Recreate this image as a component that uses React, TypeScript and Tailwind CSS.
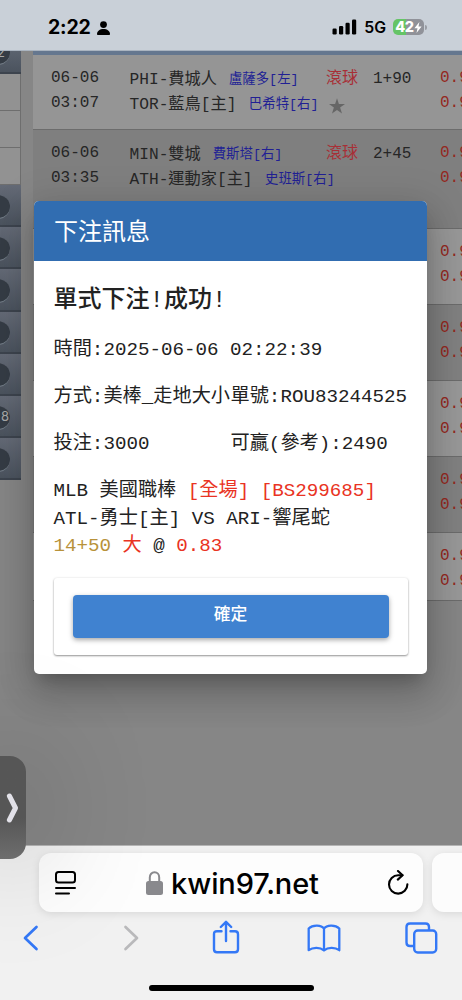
import { useState } from 'react';
import type { ReactNode } from 'react';

const games = [
  {
    date: '06-06', time: '03:07', away: 'PHI-費城人', awayPitcher: '盧薩多[左]',
    home: 'TOR-藍鳥[主]', homePitcher: '巴希特[右]', line: '1+90', star: true, row: 'h-[75px] bg-[#959595]',
  },
  {
    date: '06-06', time: '03:35', away: 'MIN-雙城', awayPitcher: '費斯塔[右]',
    home: 'ATH-運動家[主]', homePitcher: '史班斯[右]', line: '2+45', star: false, row: 'h-[99px] bg-[#7f7f7f]',
  },
];

// Rows that only show their odds beside the dialog
const moreRows = [
  'h-[76px] bg-[#989898]',
  'h-[76px] bg-[#818181]',
  'h-[76px] bg-[#989898]',
  'h-[76px] bg-[#818181]',
  'h-[68px] bg-[#989898]',
];

const menuItems = ['', '', '', '', '', '8', ''];

function StatusBar() {
  return (
    <header className="flex h-[51px] shrink-0 items-center justify-between border-b border-[#aab4c0] bg-[#c9d0d8] pt-[5px] pr-[35px] pl-[48px] text-black">
      <div className="flex items-center gap-[6px]">
        <span className="pt-px text-[19.5px] leading-none font-bold tracking-[-0.2px]">2:22</span>
        <svg className="h-[14px] w-[13px]" viewBox="0 0 13 14" fill="currentColor">
          <circle cx="6.5" cy="3.6" r="3.4" />
          <path d="M0 13.2C0 10 2.8 8 6.5 8S13 10 13 13.2Q13 14 12.2 14H.8Q0 14 0 13.2Z" />
        </svg>
      </div>
      <div className="flex items-center">
        <svg className="h-[16px] w-[25px]" viewBox="0 0 25 16" fill="currentColor">
          <rect x="0.5" y="9.5" width="4.2" height="6" rx="1.2" />
          <rect x="7" y="7" width="4.2" height="8.5" rx="1.2" />
          <rect x="13.5" y="3.8" width="4.2" height="11.7" rx="1.2" />
          <rect x="20" y="0.5" width="4.2" height="15" rx="1.2" />
        </svg>
        <span className="ml-[7px] pt-px text-[15.8px] leading-none font-semibold">5G</span>
        <div className="ml-[7px] flex h-[16px] w-[31px] items-center justify-center rounded-[5px] bg-linear-to-r from-[#65c466] from-42% to-[#909299] to-42%">
          <span className="text-[14.5px] leading-none font-extrabold tracking-[-0.3px] text-white">42</span>
          <svg className="h-[11px] w-[8px]" viewBox="0 0 8 11" fill="#fff">
            <path d="M5.4 0L.4 6.3H3.5L2.5 11 7.6 4.6H4.5Z" />
          </svg>
        </div>
        <div className="ml-px h-[5px] w-[2px] rounded-r-full bg-[#9a9da4]" />
      </div>
    </header>
  );
}

function MenuButton({ label }: { label: string }) {
  return (
    <div className="flex h-[42.2px] items-center overflow-hidden border-b-2 border-[#3d444e] bg-linear-to-b from-[#646a76] to-[#4b535e] pt-[3px]">
      <div className="-ml-[14px] flex size-[24px] shrink-0 items-center justify-end rounded-full border-b border-[#77818b] bg-[#353c45] pr-px text-[13px] text-[#a8a8a8]">
        {label}
      </div>
    </div>
  );
}

function Sidebar() {
  return (
    <aside className="flex w-[21px] shrink-0 flex-col">
      <div className="h-[23px] overflow-hidden border-b-2 border-[#3d444e] bg-linear-to-b from-[#5a626e] to-[#4b535e]">
        <div className="-mt-[10px] -ml-[14px] flex size-[24px] items-center justify-end rounded-full border-b border-[#77818b] bg-[#353c45] pr-[5px] text-[13px] text-[#a8a8a8]">
          2
        </div>
      </div>
      <div className="h-[37px] border-r border-b border-[#6e6e6e] bg-[#929292]" />
      <div className="h-[37px] border-r border-b border-[#6e6e6e] bg-[#929292]" />
      <div className="h-[37px] border-r border-b border-[#6e6e6e] bg-[#929292]" />
      {menuItems.map((label, i) => (
        <MenuButton key={i} label={label} />
      ))}
    </aside>
  );
}

function Odds() {
  return (
    <div className="w-[22px] overflow-hidden text-[16px] leading-[24.5px] whitespace-nowrap text-[#94291f]">
      <div>0.9</div>
      <div>0.9</div>
    </div>
  );
}

function GameTable() {
  return (
    <main className="ml-[12px] min-w-0 flex-1 font-['Liberation_Mono','Noto_Sans_CJK_TC',monospace] text-[16px] text-[#262626]">
      <div className="h-[4px] bg-[#65778f]" />
      {games.map((game) => (
        <div key={game.time} className={`flex border-b border-[#6c6c6c] pt-[11px] pl-[18px] ${game.row}`}>
          <div className="w-[78.5px] shrink-0 leading-[24.5px]">
            <div>{game.date}</div>
            <div>{game.time}</div>
          </div>
          <div className="w-[310.5px] shrink-0">
            <div className="flex h-[25px] items-center whitespace-nowrap">
              <div className="flex w-[196.5px] items-center pt-[3px] text-[16.2px]">
                <span>{game.away}</span>
                <span className="ml-[12px] text-[13.4px] text-[#211f94]">{game.awayPitcher}</span>
              </div>
              <span className="w-[47px] text-[#a82f36]">滾球</span>
              <span>{game.line}</span>
            </div>
            <div className="flex h-[26px] items-center pt-[3px] text-[16.2px] whitespace-nowrap">
              <span>{game.home}</span>
              <span className="ml-[12.5px] text-[13.4px] text-[#211f94]">{game.homePitcher}</span>
              {game.star && (
                <svg className="ml-[10px] size-[16px]" viewBox="0 0 16 16" fill="#666">
                  <path d="M8 .3L9.9 6H16L11.1 9.5 13 15.5 8 11.9 3 15.5 4.9 9.5 0 6H6.1Z" />
                </svg>
              )}
            </div>
          </div>
          <Odds />
        </div>
      ))}
      {moreRows.map((row, i) => (
        <div key={i} className={`flex border-b border-[#6c6c6c] pt-[11px] pl-[407px] ${row}`}>
          <Odds />
        </div>
      ))}
    </main>
  );
}

function Line({ children }: { children: ReactNode }) {
  return <div className="flex h-[47px] items-center whitespace-nowrap">{children}</div>;
}

function BetDialog({ onConfirm }: { onConfirm: () => void }) {
  return (
    <div className="absolute top-[201px] left-[34px] flex h-[473px] w-[393px] flex-col overflow-hidden rounded-[5px] bg-white font-['Liberation_Mono','Noto_Sans_CJK_TC',monospace] text-[19.2px] text-[#222] shadow-[0_11px_15px_-7px_rgba(0,0,0,0.2),0_20px_34px_3px_rgba(0,0,0,0.14),0_9px_40px_8px_rgba(0,0,0,0.12)]">
      <div className="flex h-[60px] shrink-0 items-center bg-[#316db1] pt-[5px] pl-[20px] text-[24px] font-normal text-white">下注訊息</div>
      <div className="flex flex-col px-[19.5px]">
        <h2 className="flex h-[66px] items-center pt-[14px] text-[24px] font-medium">單式下注!成功!</h2>
        <Line>時間:2025-06-06 02:22:39</Line>
        <Line>
          <span className="w-1/2">方式:美棒_走地大小</span>
          <span className="w-1/2">單號:ROU83244525</span>
        </Line>
        <Line>
          <span className="w-1/2">投注:3000</span>
          <span className="w-1/2">可贏(參考):2490</span>
        </Line>
        <div className="mt-[10px] h-[84px] leading-[27.5px] whitespace-nowrap">
          <div>MLB 美國職棒 <span className="text-[#e93323]">[全場] [BS299685]</span></div>
          <div>ATL-勇士[主] VS ARI-響尾蛇</div>
          <div>
            <span className="text-[#b8923a]">14+50</span> <span className="text-[#e93323]">大</span> @ <span className="text-[#e93323]">0.83</span>
          </div>
        </div>
        <div className="mt-[16px] h-[77px] rounded-[3px] px-[19px] pt-[17px] shadow-[0_1px_2px_rgba(0,0,0,0.4),0_0_3px_rgba(0,0,0,0.08)]">
          <button
            className="h-[43px] w-full rounded-[4px] bg-[#4082d0] pb-px text-[16.8px] font-medium text-white shadow-[0_2px_5px_rgba(0,0,0,0.35)]"
            onClick={onConfirm}
          >
            確定
          </button>
        </div>
      </div>
    </div>
  );
}

function BrowserBar() {
  return (
    <footer className="flex h-[155px] shrink-0 flex-col overflow-hidden border-t border-[#b5b5b5] bg-[#f1f1f1]">
      <div className="mt-[7px] flex h-[59px] shrink-0 gap-[9px] pl-[39px]">
        <div className="flex w-[384px] shrink-0 items-center justify-between rounded-[12px] bg-[#fdfdfd] pr-[14px] pl-[15px] text-black shadow-[0_2px_8px_rgba(0,0,0,0.1)]">
          <svg className="size-[24px]" viewBox="0 0 24 24" fill="none" stroke="currentColor" strokeWidth="2" strokeLinecap="round">
            <rect x="2" y="1" width="19" height="10.5" rx="2.5" />
            <path d="M2 17H21M2 22.5H15" />
          </svg>
          <div className="flex items-center gap-[8px]">
            <svg className="h-[24px] w-[17px]" viewBox="0 0 17 24" fill="none">
              <rect x="0" y="10" width="17" height="14" rx="2.5" fill="#89898d" />
              <path d="M3.8 10.5V6.5C3.8 3.5 5.8 1.3 8.5 1.3S13.2 3.5 13.2 6.5V10.5" stroke="#89898d" strokeWidth="2" />
            </svg>
            <span className="pt-px text-[29px] leading-none font-medium tracking-[-0.1px]">kwin97.net</span>
          </div>
          <svg className="h-[26px] w-[22px]" viewBox="0 0 22 26" fill="none" stroke="currentColor" strokeWidth="2.1" strokeLinecap="round" strokeLinejoin="round">
            <path d="M15.4 5.2H11.2A9.2 9.2 0 1 0 20.4 14.3" />
            <path d="M11 1L15.6 5.3 10.8 9.6" />
          </svg>
        </div>
        <div className="w-[60px] shrink-0 rounded-[12px] bg-[#fcfcfc] shadow-[0_2px_8px_rgba(0,0,0,0.1)]" />
      </div>
      <nav className="mt-[8px] flex h-[36px] items-center justify-between pr-[24px] pl-[22px] text-[#3478f6]">
        <svg className="h-[26px] w-[17px]" viewBox="0 0 17 26" fill="none" stroke="currentColor" strokeWidth="2.7" strokeLinecap="round" strokeLinejoin="round">
          <path d="M14.5 2L3 13 14.5 24" />
        </svg>
        <svg className="ml-[19px] h-[26px] w-[17px]" viewBox="0 0 17 26" fill="none" stroke="#b9b9bb" strokeWidth="2.7" strokeLinecap="round" strokeLinejoin="round">
          <path d="M2.5 2L14 13 2.5 24" />
        </svg>
        <svg className="mr-[2px] mb-[2px] ml-[8px] h-[34px] w-[28px]" viewBox="0 0 28 34" fill="none" stroke="currentColor" strokeWidth="2.4" strokeLinecap="round" strokeLinejoin="round">
          <path d="M9.5 11.2H5Q2 11.2 2 14.2V29.2Q2 32.2 5 32.2H23Q26 32.2 26 29.2V14.2Q26 11.2 23 11.2H18.5" />
          <path d="M14 21V2M8.8 7L14 1.8 19.2 7" />
        </svg>
        <svg className="h-[30px] w-[34px]" viewBox="0 0 34 30" fill="none" stroke="currentColor" strokeWidth="2.3" strokeLinejoin="round">
          <path d="M17 5.5C14.5 2 6 1.2 1.7 5.5V27.2C6 24 13 24 17 27.5 21 24 28 24 32.3 27.2V5.5C28 1.2 19.5 2 17 5.5ZM17 5.5V27.5" />
        </svg>
        <svg className="h-[32px] w-[33px]" viewBox="0 0 33 32" fill="none" stroke="currentColor" strokeWidth="2.4" strokeLinejoin="round">
          <rect x="9.2" y="8.5" width="22" height="22" rx="3.5" />
          <path d="M9.2 24H5Q1.5 24 1.5 20.5V5Q1.5 1.5 5 1.5H20.5Q24 1.5 24 5V8.5" />
        </svg>
      </nav>
      <div className="mt-[29px] ml-[149px] h-[6px] w-[165px] rounded-full bg-black" />
    </footer>
  );
}

export default function App() {
  const [open, setOpen] = useState(true);

  return (
    <div className="relative flex h-[1000px] w-[462px] flex-col overflow-hidden bg-[#868686] font-['Inter','Noto_Sans_CJK_TC',sans-serif]">
      <StatusBar />
      <div className="flex min-h-0 flex-1 items-start">
        <Sidebar />
        <GameTable />
      </div>
      <BrowserBar />
      {open && <BetDialog onConfirm={() => setOpen(false)} />}
      {/* Edge handle of the hidden floating video */}
      <div className="absolute top-[756px] left-0 flex h-[103px] w-[26px] items-center justify-center rounded-r-[16px] bg-linear-to-b from-[#565656] from-60% to-[#6e6e6e] shadow-[0_0_110px_10px_rgba(0,0,0,0.25)]">
        <svg className="h-[32px] w-[14px]" viewBox="0 0 14 32" fill="none" stroke="#e2e1e8" strokeWidth="5" strokeLinecap="round" strokeLinejoin="round">
          <path d="M3.4 4L9.5 16 3.4 28" />
        </svg>
      </div>
    </div>
  );
}
